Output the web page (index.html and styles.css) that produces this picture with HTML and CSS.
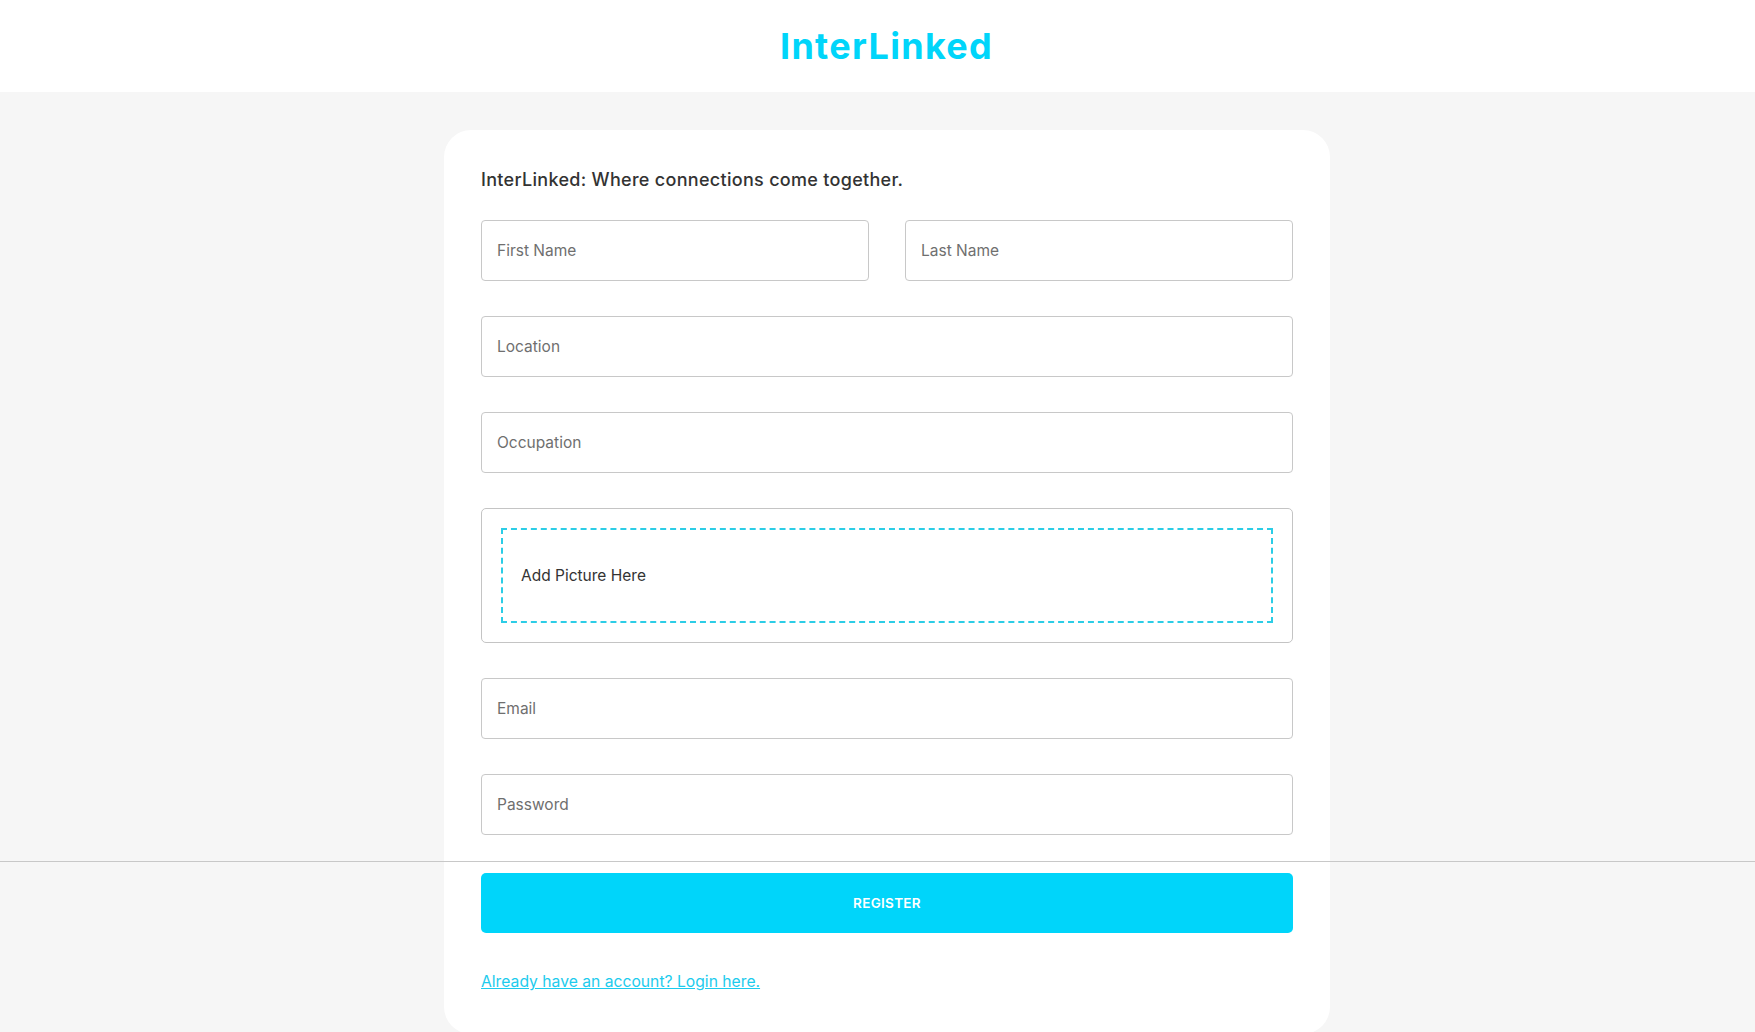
FILE: index.html
```html
<!DOCTYPE html>
<html lang="en">
<head>
<meta charset="utf-8">
<title>InterLinked</title>
<link rel="stylesheet" href="styles.css">
</head>
<body>
<header class="topbar">
  <h1 class="brand">InterLinked</h1>
</header>
<main class="page">
  <section class="card">
    <h2 class="tagline">InterLinked: Where connections come together.</h2>
    <form class="form">
      <input class="field" type="text" placeholder="First Name">
      <input class="field" type="text" placeholder="Last Name">
      <input class="field span" type="text" placeholder="Location">
      <input class="field span" type="text" placeholder="Occupation">
      <div class="picture span">
        <div class="dropzone">Add Picture Here</div>
      </div>
      <input class="field span" type="email" placeholder="Email">
      <input class="field span" type="password" placeholder="Password">
    </form>
    <button class="register" type="button">REGISTER</button>
    <a class="login" href="#">Already have an account? Login here.</a>
  </section>
</main>
<div class="rule"></div>
</body>
</html>
```
FILE: styles.css
```css
html, body {
  margin: 0;
  padding: 0;
}
body {
  background: #f6f6f6;
  font-family: Inter, "Noto Sans", "Liberation Sans", sans-serif;
  height: 1032px;
  overflow: hidden;
  position: relative;
}
.topbar {
  height: 92px;
  background: #ffffff;
  display: flex;
  align-items: center;
  justify-content: center;
  padding-left: 18px;
  box-sizing: border-box;
}
.brand {
  margin: 0;
  font-size: 36px;
  font-weight: 700;
  color: #00d5fa;
  letter-spacing: 1.3px;
  line-height: 1;
}
.page {
  display: flex;
  justify-content: center;
  padding-left: 19px;
}
.card {
  width: 886px;
  box-sizing: border-box;
  margin-top: 38px;
  background: #ffffff;
  border-radius: 27px;
  padding: 39px 37px 41px;
}
.tagline {
  margin: 0 0 29px;
  font-size: 18px;
  letter-spacing: 0.3px;
  line-height: 22px;
  font-weight: 500;
  color: #333333;
}
.form {
  display: grid;
  grid-template-columns: 1fr 1fr;
  column-gap: 36px;
  row-gap: 35px;
}
.span {
  grid-column: 1 / -1;
}
.field {
  height: 61px;
  box-sizing: border-box;
  border: 1px solid #c8c8c8;
  border-radius: 4px;
  padding: 0 15px;
  font-family: inherit;
  font-size: 15.5px;
  color: #333;
  background: #fff;
  outline: none;
  width: 100%;
}
.field::placeholder {
  color: #6f6f6f;
}
.picture {
  border: 1px solid #c4c4c4;
  border-radius: 5px;
  padding: 19px;
}
.dropzone {
  height: 95px;
  box-sizing: border-box;
  border: 2px dashed #2ccde6;
  padding: 0 18px;
  display: flex;
  align-items: center;
  font-size: 15.5px;
  color: #333333;
}
.register {
  display: block;
  width: 100%;
  height: 60px;
  margin-top: 38px;
  border: none;
  border-radius: 5px;
  background: #00d5fa;
  color: #ffffff;
  font-family: inherit;
  font-size: 13.5px;
  font-weight: 600;
  letter-spacing: 0.3px;
}
.login {
  display: inline-block;
  margin-top: 38px;
  font-size: 15.7px;
  line-height: 22px;
  color: #1ccbed;
  text-decoration: underline;
}
.rule {
  position: absolute;
  left: 0;
  right: 0;
  top: 861px;
  height: 1px;
  background: #c8c8c8;
}
```
